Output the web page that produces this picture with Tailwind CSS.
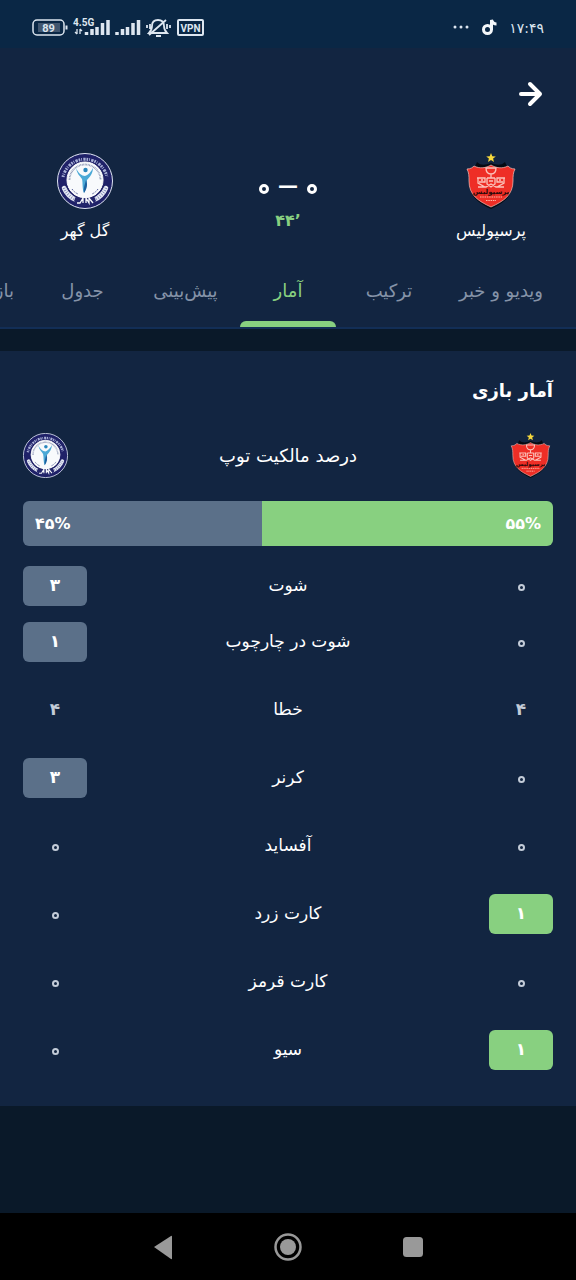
<!DOCTYPE html>
<html lang="fa" dir="rtl">
<head>
  <meta charset="UTF-8" />
  <meta name="viewport" content="width=device-width, initial-scale=1.0" />
  <title>آمار بازی</title>
  <script src="https://cdn.jsdelivr.net/npm/@tailwindcss/browser@4"></script>
</head>
<body class="min-h-screen flex flex-col bg-[#0a1929] text-white font-['DejaVu_Sans',sans-serif] overflow-x-hidden">

  <!-- Crests -->
  <svg class="hidden">
    <symbol id="persepolis" viewBox="0 0 50 56">
      <path fill="#f6d83c" d="M25 0l1.3 3.2 3.5.2-2.7 2.2.9 3.4-3-1.9L22 9l.9-3.4-2.7-2.2 3.5-.2z" />
      <path fill="#050a12" d="M11 9c4 4 9 3 14 1 5 2 10 3 14-1l3 7 5 0c-1 5 0 8 0 13 0 14-9 21-22 27C12 50 3 43 3 29c0-5 1-8 0-13h5z" />
      <path fill="#ee2e26" stroke="#f3c4be" stroke-width=".7" d="M1 16c4 0 6-2 7-3 6 3 12 2 17-1 5 3 11 4 17 1 1 1 3 3 7 3-2 4-2 7-2 12 0 14-9 20-22 26C12 48 3 42 3 28c0-5 0-8-2-12z" />
      <g fill="none" stroke="#fbc4bc" stroke-width="1.3">
        <path d="M20 15h10c0 4-2 6-5 6s-5-2-5-6zM25 21v4" />
        <path d="M11 25h8v4h-6M12 25v5l7 4M39 25h-8v4h6M38 25v5l-7 4M21 25h8M21 25v6l4 3 4-3v-6M23 28h4M12 34h8l5-3 5 3h8M15 27h2M33 27h2" />
      </g>
      <text x="25" y="41" text-anchor="middle" font-size="7" font-weight="bold" fill="#2b0a0a">پرسپولیس</text>
      <path stroke="#fbb8a8" stroke-width="1.2" stroke-dasharray="1.5 .8" d="M14 44h22M20 47.500h10" />
    </symbol>
    <symbol id="golgohar" viewBox="0 0 56 56">
      <circle cx="28" cy="28" r="27.500" fill="#1f2168" stroke="#dfe5f2" stroke-width="1" />
      <path fill="none" stroke="#a9b1d6" stroke-width="3" stroke-dasharray="1.600 1 .8 1.300 2.400 .9" d="M6 24a22.500 22.500 0 0 1 44 0" />
      <circle cx="28" cy="27" r="18" fill="#f8fafc" stroke="#fff" />
      <path fill="none" stroke="#8791b0" stroke-width="1.800" stroke-dasharray=".8 .7" d="M12.500 27a15.500 15.500 0 0 1 31 0" />
      <path fill="none" stroke="#4b5690" stroke-width="1" stroke-dasharray="1 .8" d="M15 36c2 3 4 4 6 5M41 36c-2 3-4 4-6 5" />
      <path fill="none" stroke="#1f2168" stroke-width="8" d="M6 33a23 23 0 0 0 14 15M50 33a23 23 0 0 1-14 15" />
      <path fill="none" stroke="#e6eaf4" stroke-width="4.500" stroke-linecap="round" d="M7 35a23 23 0 0 0 12 12M49 35a23 23 0 0 1-12 12" />
      <path fill="none" stroke="#6a73a6" stroke-width="3" stroke-dasharray=".6 1.800" d="M7 35a23 23 0 0 0 12 12M49 35a23 23 0 0 1-12 12" />
      <path fill="#23266b" d="M19 43c6 3 12 3 18 0l2 5-4 5H21l-4-5z" />
      <path fill="none" stroke="#f8fafc" stroke-width="1.300" d="M20 50h3l3-5v5M29 50v-5l3 5v-5l4 5" />
      <circle cx="28.500" cy="17" r="2.200" fill="#2a87bd" />
      <path fill="#4ba9d6" d="M19 15c1 6 4 8 6 11 1 4 0 9 2 14 3-4 2-9 3-13 3-3 6-7 6-12-2 4-5 7-8 8-3 0-7-3-9-8z" />
      <path fill="#1d62a0" d="M29 27c2 4 1 9-2 13-1-4 1-9 2-13z" />
    </symbol>
  </svg>

  <!-- Status bar -->
  <div dir="ltr" class="h-12 shrink-0 bg-[#0a2745] flex items-center justify-between px-8 pt-2 text-[#dde6f0]">
    <svg class="w-44 h-6" viewBox="0 0 176 24" fill="none" stroke="#dde6f0" font-family="Roboto">
      <rect x="1" y="4" width="31" height="15" rx="4" stroke-width="1.500" />
      <rect x="6" y="7" width="22" height="9" fill="#41566f" stroke="none" />
      <path d="M34.500 9.500v4" stroke-width="2" />
      <text x="16.500" y="16" text-anchor="middle" font-size="11" font-weight="bold" fill="#dde6f0" stroke="none">89</text>
      <text x="41" y="10" font-size="10" font-weight="bold" fill="#dde6f0" stroke="none">4.5G</text>
      <path d="M45 13v5m-2-2l2 2M48 18v-5m2 2l-2-2" stroke-width="1.300" />
      <path d="M54.500 19v-3M60 19v-6M65 19v-8M70.500 19V7M76 19V4M85 19v-3M90.500 19v-6M95.500 19v-8M101 19V7M106.500 19V4" stroke-width="3.500" />
      <path d="M117 17h18c-2-2-3-4-3-7 0-4-2-6-6-6s-6 2-6 6c0 3-1 5-3 7zM134 4l-17 15M124 20h5M118 8v5M115 9v3M135 8v5M138 9v3" stroke-width="1.800" />
      <rect x="146" y="4" width="25" height="15" rx="1" stroke-width="2" />
      <text x="158.500" y="15.500" text-anchor="middle" font-size="10" font-weight="bold" fill="#dde6f0" stroke="none">VPN</text>
    </svg>
    <div class="flex items-center gap-3">
      <svg class="w-4 h-6" viewBox="0 0 16 24" fill="#dde6f0"><circle cx="2" cy="11" r="1.500" /><circle cx="8" cy="11" r="1.500" /><circle cx="14" cy="11" r="1.500" /></svg>
      <svg class="w-4 h-6" viewBox="0 0 16 24" fill="none" stroke="#f4f7fa" stroke-width="3"><circle cx="6.500" cy="13.500" r="4" /><path d="M10.500 14V4c1 3 2 4 5 4" /></svg>
      <span class="text-sm">۱۷:۴۹</span>
    </div>
  </div>

  <header class="bg-[#122541] border-b-2 border-[#122e56]">
    <div class="flex justify-end px-8 pt-8" dir="ltr">
      <button type="button" aria-label="بازگشت" class="block">
        <svg class="w-7 h-7" viewBox="0 0 28 28" fill="none" stroke="#fff" stroke-width="4" stroke-linecap="round" stroke-linejoin="round"><path d="M5 14h19M14 4l10 10-10 10" /></svg>
      </button>
    </div>

    <!-- Score -->
    <div class="flex items-start justify-between px-5 pt-[45px]">
      <div class="w-[130px] flex flex-col items-center">
        <svg class="w-[50px] h-14"><use href="#persepolis" /></svg>
        <span class="mt-2 text-base leading-7">پرسپولیس</span>
      </div>
      <div class="flex flex-col items-center pt-4">
        <div dir="ltr" class="flex items-center gap-[9px] h-8 text-xl">
          <span class="mt-2 size-[10px] flex items-center justify-center rounded-full border-[3px] border-white text-transparent text-xs">۰</span>
          <span class="leading-8 font-bold">—</span>
          <span class="mt-2 size-[10px] flex items-center justify-center rounded-full border-[3px] border-white text-transparent text-xs">۰</span>
        </div>
        <span dir="ltr" class="mt-1 text-base leading-8 font-bold text-[#88d080]">۴۴’</span>
      </div>
      <div class="w-[130px] flex flex-col items-center">
        <svg class="w-14 h-14"><use href="#golgohar" /></svg>
        <span class="mt-2 text-base leading-7">گل گهر</span>
      </div>
    </div>

    <!-- Tabs -->
    <nav class="mt-4 flex ps-4 overflow-hidden text-lg leading-8 text-[#8593a8] whitespace-nowrap text-center">
      <a href="#" class="shrink-0 w-[118px] h-[66px] pt-[14px]">ویدیو و خبر</a>
      <a href="#" class="shrink-0 w-[106px] h-[66px] pt-[14px]">ترکیب</a>
      <a href="#" class="shrink-0 w-24 h-[66px] pt-[14px] text-[#88d080] flex flex-col justify-between" aria-current="page">آمار<span class="h-[6px] rounded-t-md bg-[#88d080]"></span></a>
      <a href="#" class="shrink-0 w-[109px] h-[66px] pt-[14px]">پیش‌بینی</a>
      <a href="#" class="shrink-0 w-[97px] h-[66px] pt-[14px]">جدول</a>
      <a href="#" class="shrink-0 w-24 h-[66px] pt-[14px] ps-5 text-start">بازی‌ها</a>
    </nav>
  </header>

  <!-- Stats -->
  <main class="mt-[22px] bg-[#122541] px-[23px] pt-5 pb-9">
    <h1 class="text-lg leading-10 font-bold">آمار بازی</h1>
    <div class="mt-[22px] flex items-center justify-between">
      <svg class="w-[45px] h-[45px]"><use href="#persepolis" /></svg>
      <h2 class="text-lg leading-8">درصد مالکیت توپ</h2>
      <svg class="w-[45px] h-[45px]"><use href="#golgohar" /></svg>
    </div>
    <div class="mt-[23px] h-[45px] flex rounded-md overflow-hidden text-base font-bold">
      <div class="bg-[#88d080] px-3 flex items-center" style="width:55%"><span dir="ltr">۵۵%</span></div>
      <div class="bg-[#5b7089] px-3 flex items-center justify-end" style="width:45%"><span dir="ltr">۴۵%</span></div>
    </div>

    <table class="mt-1 w-full text-center text-[17px]">
      <tbody id="stats"></tbody>
    </table>
  </main>

  <!-- System navigation -->
  <footer dir="ltr" class="mt-auto h-[67px] bg-black flex items-center justify-center gap-[97px]">
    <button type="button" aria-label="برگشت"><svg class="w-7 h-7" viewBox="0 0 28 28" fill="#999"><path d="M5 14L22 3q1-.5 1 .5v22q0 1-1 .5z" /></svg></button>
    <button type="button" aria-label="خانه"><svg class="w-7 h-7" viewBox="0 0 28 28" fill="#999"><circle cx="14" cy="14" r="12.500" fill="none" stroke="#999" stroke-width="2.500" /><circle cx="14" cy="14" r="8" /></svg></button>
    <button type="button" aria-label="برنامه‌ها"><svg class="w-7 h-7" viewBox="0 0 28 28" fill="#999"><rect x="4" y="4" width="20" height="20" rx="3.500" /></svg></button>
  </footer>

  <script>
    // home, label, away
    const stats = [
      ["۰", "شوت", "۳"],
      ["۰", "شوت در چارچوب", "۱"],
      ["۴", "خطا", "۴"],
      ["۰", "کرنر", "۳"],
      ["۰", "آفساید", "۰"],
      ["۱", "کارت زرد", "۰"],
      ["۰", "کارت قرمز", "۰"],
      ["۱", "سیو", "۰"],
    ];

    // the font draws a Persian zero as a dot, so it gets a ring instead
    const ring = `<span class="mt-[2px] size-[7px] flex items-center justify-center rounded-full border-2 border-[#c3ccd8] text-transparent text-xs">۰</span>`;

    function cell(value, other, color) {
      const style = value > other ? color : "text-[#c3ccd8]";
      return `<span class="flex items-center justify-center h-10 rounded-md font-bold ${style}">${value === "۰" ? ring : value}</span>`;
    }

    document.getElementById("stats").innerHTML = stats.map(([home, label, away], i) => `
      <tr class="${i < 2 ? "h-14" : "h-[68px]"}">
        <td class="w-16 ${i < 2 ? "pt-4" : "pt-7"}">${cell(home, away, "bg-[#88d080]")}</td>
        <th scope="row" class="font-normal ${i < 2 ? "pt-4" : "pt-7"}">${label}</th>
        <td class="w-16 ${i < 2 ? "pt-4" : "pt-7"}">${cell(away, home, "bg-[#5b7089]")}</td>
      </tr>`).join("");
  </script>
</body>
</html>
